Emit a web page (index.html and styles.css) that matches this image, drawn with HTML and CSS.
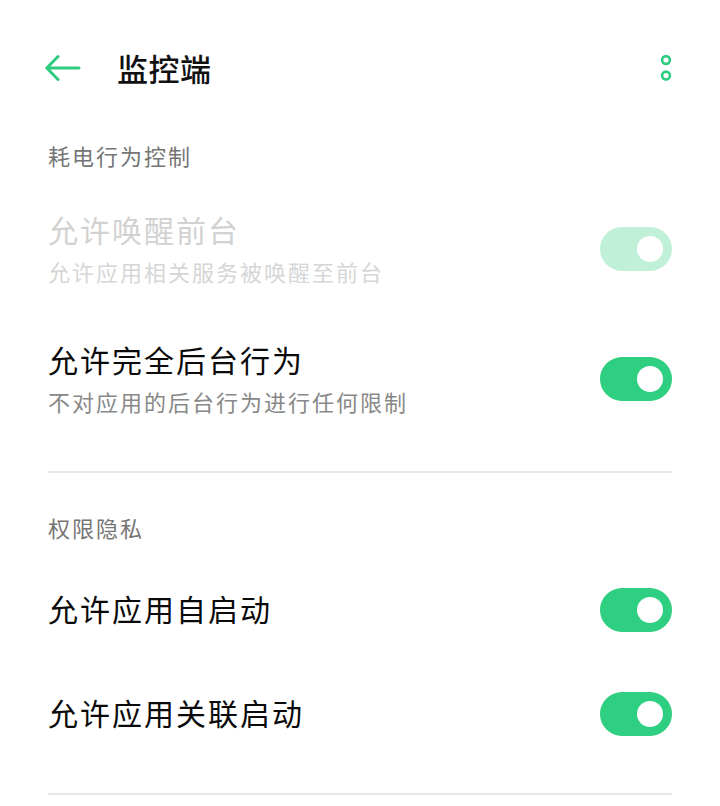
FILE: index.html
```html
<!DOCTYPE html>
<html lang="zh-CN">
<head>
<meta charset="utf-8">
<title>监控端</title>
<link rel="stylesheet" href="styles.css">
</head>
<body>
<header class="appbar">
  <svg class="back" width="36" height="28" viewBox="0 0 36 28" aria-hidden="true">
    <path d="M13 2.5 L1.8 14 L13 25.5 M1.8 14 H34" fill="none" stroke="#2ecc7e" stroke-width="3" stroke-linecap="round" stroke-linejoin="round"/>
  </svg>
  <h1 class="title">监控端</h1>
  <svg class="more" width="14" height="30" viewBox="0 0 14 30" aria-hidden="true">
    <circle cx="7" cy="7" r="3.9" fill="none" stroke="#2ecc7e" stroke-width="2.6"/>
    <circle cx="7" cy="22.5" r="3.9" fill="none" stroke="#2ecc7e" stroke-width="2.6"/>
  </svg>
</header>

<main class="content">
  <section class="group group-first">
    <h2 class="group-title">耗电行为控制</h2>
    <div class="row row-two">
      <div class="text">
        <div class="row-title disabled">允许唤醒前台</div>
        <div class="row-sub disabled">允许应用相关服务被唤醒至前台</div>
      </div>
      <span class="switch on disabled-switch"><span class="knob"></span></span>
    </div>
    <div class="row row-two">
      <div class="text">
        <div class="row-title">允许完全后台行为</div>
        <div class="row-sub">不对应用的后台行为进行任何限制</div>
      </div>
      <span class="switch on"><span class="knob"></span></span>
    </div>
  </section>
  <hr class="divider">
  <section class="group">
    <h2 class="group-title">权限隐私</h2>
    <div class="row row-one">
      <div class="row-title">允许应用自启动</div>
      <span class="switch on"><span class="knob"></span></span>
    </div>
    <div class="row row-one">
      <div class="row-title">允许应用关联启动</div>
      <span class="switch on"><span class="knob"></span></span>
    </div>
  </section>
  <hr class="divider">
</main>
</body>
</html>
```

FILE: styles.css
```css
* { box-sizing: border-box; }
html, body {
  margin: 0;
  padding: 0;
  background: #ffffff;
}
body {
  font-family: "Noto Sans CJK SC", "Noto Sans", sans-serif;
  color: #000;
  width: 720px;
}
.appbar {
  height: 136px;
  display: flex;
  align-items: center;
  padding: 0 48px 0 45px;
}
.back {
  display: block;
  flex: none;
}
.title {
  margin: 0 0 0 36px;
  font-size: 31px;
  font-weight: 500;
  line-height: 40px;
  letter-spacing: 0.5px;
  color: #111;
  flex: 1;
}
.more {
  display: block;
  flex: none;
  margin-right: -1px;
}
.content {
  padding: 0 48px;
}
.group-title {
  margin: 39px 0 16px;
  font-size: 22px;
  font-weight: 400;
  line-height: 30px;
  letter-spacing: 2px;
  color: #757575;
}
.group-first .group-title {
  margin-top: 4px;
  margin-bottom: 14px;
}
.row {
  display: flex;
  align-items: center;
  justify-content: space-between;
}
.row-two {
  height: 130px;
}
.row-one {
  height: 104px;
}
.text {
  padding-bottom: 4px;
}
.row-title {
  font-size: 30px;
  line-height: 44px;
  letter-spacing: 2px;
  color: #0a0a0a;
}
.row-one .row-title {
  padding-bottom: 4px;
}
.row-sub {
  margin-top: 3px;
  font-size: 22px;
  line-height: 34px;
  letter-spacing: 2px;
  color: #888888;
}
.row-title.disabled { color: #d2d2d2; }
.row-sub.disabled { color: #d6d6d6; }
.switch {
  flex: none;
  width: 72px;
  height: 44px;
  border-radius: 22px;
  background: #2ecf80;
  display: flex;
  align-items: center;
  justify-content: flex-end;
  padding-right: 9px;
}
.switch.disabled-switch {
  background: #c1f0d9;
}
.knob {
  width: 26px;
  height: 26px;
  border-radius: 50%;
  background: #ffffff;
}
.divider {
  margin: 27px 0 0;
  border: 0;
  height: 2px;
  background: #e6e6e6;
}
```
